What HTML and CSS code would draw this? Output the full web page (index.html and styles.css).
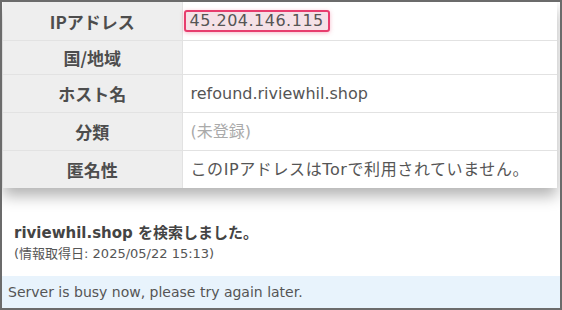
FILE: index.html
```html
<!DOCTYPE html>
<html lang="ja">
<head>
    <meta charset="UTF-8">
    <meta name="viewport" content="width=device-width, initial-scale=1.0">
    <title>IP情報</title>
    <link rel="stylesheet" href="styles.css">
</head>
<body>
    <div class="frame">
        <table class="info-table">
            <tr>
                <th>IPアドレス</th>
                <td><span class="ip-mark">45.204.146.115</span></td>
            </tr>
            <tr>
                <th>国/地域</th>
                <td></td>
            </tr>
            <tr>
                <th>ホスト名</th>
                <td>refound.riviewhil.shop</td>
            </tr>
            <tr>
                <th>分類</th>
                <td class="muted">(未登録)</td>
            </tr>
            <tr>
                <th>匿名性</th>
                <td class="wide">このIPアドレスはTorで利用されていません。</td>
            </tr>
        </table>

        <div class="search-note">
            <p class="search-title">riviewhil.shop を検索しました。</p>
            <p class="search-date">(情報取得日: 2025/05/22 15:13)</p>
        </div>

        <div class="busy-box">Server is busy now, please try again later.</div>
    </div>
</body>
</html>
```

FILE: styles.css
```css
/* Estilos generales */
body {
    margin: 0;
    font-family: "DejaVu Sans", "Noto Sans CJK JP", sans-serif;
    color: #555;
    background: #fff;
}

/* Marco exterior */
.frame {
    height: 310px;
    box-sizing: border-box;
    border: 2px solid #6b6b6b;
    overflow: hidden;
    display: flex;
    flex-direction: column;
}

/* Tabla de datos */
.info-table {
    width: calc(100% - 4px);
    table-layout: fixed;
    border-collapse: collapse;
    margin: 0 3px 0 1px;
    box-shadow: 0 8px 14px rgba(0, 0, 0, 0.3);
    background: #fff;
}

.info-table th,
.info-table td {
    border-bottom: 1px solid #e2e2e2;
    padding: 8px;
    font-size: 16px;
    line-height: 21px;
    text-align: left;
}

.info-table tr:last-child th,
.info-table tr:last-child td {
    border-bottom: none;
}

.info-table th {
    box-sizing: border-box;
    width: 179px;
    background: #eeeeee;
    text-align: center;
    font-family: "Noto Sans CJK JP", sans-serif;
    font-weight: bold;
    font-size: 17px;
    line-height: 17px;
    color: #4d4d4d;
    border-right: 1px solid #e2e2e2;
}

.info-table td {
    font-family: "DejaVu Sans", "Noto Sans CJK JP", sans-serif;
    color: #555;
}

.info-table td.muted {
    color: #aaa;
}

.info-table td.wide {
    letter-spacing: 0.6px;
}

/* Resaltado de la IP */
.ip-mark {
    display: inline-block;
    vertical-align: top;
    margin-left: -7px;
    padding: 0 4px;
    line-height: 18px;
    letter-spacing: 0.5px;
    border: 2px solid #e73d6e;
    border-radius: 3px;
    background: #f5e1e7;
    box-shadow: 0 1px 4px rgba(231, 61, 110, 0.35);
}

/* Nota de búsqueda */
.search-note {
    padding: 34px 12px 12px;
}

.search-note p {
    margin: 0;
}

.search-title {
    font-weight: bold;
    font-size: 15px;
    line-height: 22px;
    color: #444;
}

.search-date {
    margin-top: 2px;
    font-size: 13px;
    line-height: 20px;
    color: #555;
}

/* Aviso de servidor ocupado */
.busy-box {
    flex: 1;
    background: #e8f3fc;
    padding: 8px 6px;
    font-size: 14px;
    line-height: 17px;
    color: #555;
}
```
